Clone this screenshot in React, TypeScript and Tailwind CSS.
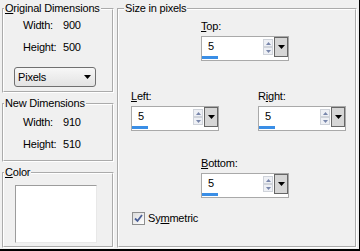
import type { ReactNode } from "react"

function GroupBox({
  title,
  className,
  legendClass,
  children,
}: {
  title: ReactNode
  className: string
  legendClass: string
  children: ReactNode
}) {
  return (
    <fieldset className={`border-2 border-white [border-style:groove] ${className}`}>
      <legend className={`px-[1px] ${legendClass}`}>{title}</legend>
      {children}
    </fieldset>
  )
}

function Arrow({ color = "#000", w = 7, h = 4, up = false }: { color?: string; w?: number; h?: number; up?: boolean }) {
  return (
    <svg width={w} height={h} viewBox={`0 0 ${w} ${h}`}>
      <path d={up ? `M0 ${h}H${w}L${w / 2} 0Z` : `M0 0H${w}L${w / 2} ${h}Z`} fill={color} />
    </svg>
  )
}

function SpinField({ label, className }: { label: ReactNode; className: string }) {
  return (
    <div className={`flex flex-col ${className}`}>
      <span>{label}</span>
      <div className="mt-[3px] flex h-[25px] w-[88px] border border-[#a9a9a9] bg-white">
        <div className="flex flex-1 flex-col">
          <span className="pl-[6px] pt-[3px]">5</span>
          <span className="mt-auto mb-[1px] h-[3px] w-[16px] bg-[#3a8ee6]" />
        </div>
        <div className="flex w-[11px] flex-col pt-[2px]">
          <div className="flex h-[8px] w-[10px] items-center justify-center border border-[#cfd3da] bg-[#eef0f5]">
            <Arrow color="#7886ab" w={5} h={3} up />
          </div>
          <div className="flex h-[8px] w-[10px] items-center justify-center border border-[#cfd3da] bg-[#eef0f5]">
            <Arrow color="#7886ab" w={5} h={3} />
          </div>
        </div>
        <div className="flex h-[20px] w-[14px] items-center justify-center border border-[#666666] bg-[#d6d6d6]">
          <Arrow />
        </div>
      </div>
    </div>
  )
}

function Row({ label, value }: { label: string; value: string }) {
  return (
    <>
      <span>{label}</span>
      <span>{value}</span>
    </>
  )
}

export default function App() {
  return (
    <div className="flex h-[251px] w-[360px] gap-[3px] border-r border-b-2 border-black bg-[#f0f0f0] pt-[2px] pr-[1px] pb-[1px] pl-[2px] font-['Liberation_Sans',Arial,sans-serif] text-[11px] leading-[13px] tracking-[-0.2px] text-black">
      <div className="flex w-[112px] flex-col gap-[4px]">
        <GroupBox
          title={
            <>
              <span className="underline">O</span>riginal Dimensions
            </>
          }
          className="h-[91px]"
          legendClass=""
        >
          <div className="mt-[4px] ml-[19px] grid grid-cols-[40px_auto] gap-y-[9px]">
            <Row label="Width:" value="900" />
            <Row label="Height:" value="500" />
          </div>
          <div className="mt-[13px] ml-[10px] flex h-[20px] w-[82px] items-center justify-between rounded-[3px] border border-[#707070] bg-linear-to-b from-[#f7f7f7] to-[#e3e3e3] pr-[4px] pl-[3px]">
            <span>Pixels</span>
            <Arrow />
          </div>
        </GroupBox>

        <GroupBox title="New Dimensions" className="h-[65px]" legendClass="">
          <div className="mt-[6px] ml-[19px] grid grid-cols-[40px_auto] gap-y-[9px]">
            <Row label="Width:" value="910" />
            <Row label="Height:" value="510" />
          </div>
        </GroupBox>

        <GroupBox
          title={
            <>
              <span className="underline">C</span>olor
            </>
          }
          className="h-[82px]"
          legendClass=""
        >
          <div className="mt-[6px] ml-[11px] h-[58px] w-[82px] border border-[#9c9c9c] border-r-[#e8e8e8] border-b-[#e8e8e8] bg-white" />
        </GroupBox>
      </div>

      <GroupBox title="Size in pixels" className="h-[246px] w-[240px]" legendClass="ml-[5px]">
        <SpinField
          className="mt-[5px] ml-[82px]"
          label={
            <>
              <span className="underline">T</span>op:
            </>
          }
        />
        <div className="mt-[29px] ml-[12px] flex gap-[39px]">
          <SpinField
            className=""
            label={
              <>
                <span className="underline">L</span>eft:
              </>
            }
          />
          <SpinField
            className=""
            label={
              <>
                R<span className="underline">i</span>ght:
              </>
            }
          />
        </div>
        <SpinField
          className="mt-[26px] ml-[82px]"
          label={
            <>
              <span className="underline">B</span>ottom:
            </>
          }
        />
        <div className="mt-[14px] ml-[13px] flex items-center gap-[3px]">
          <div className="flex h-[13px] w-[13px] items-center justify-center border border-[#8e8f8f] bg-linear-to-br from-[#dcdcdc] to-white">
            <svg width="9" height="9" viewBox="0 0 9 9">
              <path d="M1 4.5L3.5 7L8 1" fill="none" stroke="#4a5f97" strokeWidth="1.8" />
            </svg>
          </div>
          <span>
            Sy<span className="underline">m</span>metric
          </span>
        </div>
      </GroupBox>
    </div>
  )
}
